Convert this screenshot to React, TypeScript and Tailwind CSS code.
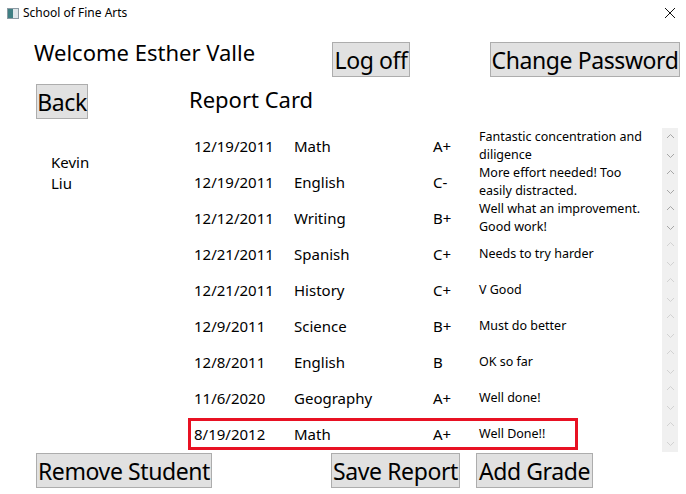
import React from "react";

type Grade = {
  date: string;
  subject: string;
  grade: string;
  comment: string;
  scroll?: boolean;
  selected?: boolean;
};

const grades: Grade[] = [
  { date: "12/19/2011", subject: "Math", grade: "A+", comment: "Fantastic concentration and diligence", scroll: true },
  { date: "12/19/2011", subject: "English", grade: "C-", comment: "More effort needed! Too easily distracted.", scroll: true },
  { date: "12/12/2011", subject: "Writing", grade: "B+", comment: "Well what an improvement. Good work!", scroll: true },
  { date: "12/21/2011", subject: "Spanish", grade: "C+", comment: "Needs to try harder" },
  { date: "12/21/2011", subject: "History", grade: "C+", comment: "V Good" },
  { date: "12/9/2011", subject: "Science", grade: "B+", comment: "Must do better" },
  { date: "12/8/2011", subject: "English", grade: "B", comment: "OK so far" },
  { date: "11/6/2020", subject: "Geography", grade: "A+", comment: "Well done!" },
  { date: "8/19/2012", subject: "Math", grade: "A+", comment: "Well Done!!", selected: true },
];

function Chevron({ up, active }: { up?: boolean; active?: boolean }) {
  return (
    <svg width="9" height="6" viewBox="0 0 9 6" className={active ? "text-[#a6a6a6]" : "text-[#d2d2d2]"}>
      <polyline
        points={up ? "1,5 4.5,1.5 8,5" : "1,1 4.5,4.5 8,1"}
        fill="none"
        stroke="currentColor"
        strokeWidth="1"
      />
    </svg>
  );
}

function Button({ label, className }: { label: string; className: string }) {
  return (
    <button
      className={`h-[35px] shrink-0 bg-[#e1e1e1] border border-[#adadad] text-[23px] leading-none text-black whitespace-nowrap tracking-[-0.4px] flex items-center justify-center pt-[2px] overflow-visible ${className}`}
    >
      {label}
    </button>
  );
}

export default function App() {
  return (
    <div className="w-[686px] h-[494px] bg-white text-black overflow-hidden font-['Noto_Sans','Open_Sans',sans-serif]">
      {/* title bar */}
      <div className="h-[26px] flex items-center pl-[7px] pr-[10px]">
        <svg width="12" height="11" viewBox="0 0 12 11">
          <rect x="0.5" y="0.5" width="11" height="10" fill="#f4f4f4" stroke="#8c9aa3" />
          <rect x="1" y="1" width="5" height="9" fill="#3f7f83" />
          <rect x="6" y="1" width="5" height="9" fill="#dfe6ea" />
        </svg>
        <span className="ml-[4px] text-[12px] leading-none">School of Fine Arts</span>
        <svg width="12" height="12" viewBox="0 0 12 12" className="ml-auto">
          <path d="M1 1 L11 11 M11 1 L1 11" stroke="#111" strokeWidth="1" />
        </svg>
      </div>

      {/* top row */}
      <div className="flex h-[34px] mt-[16px]">
        <div className="w-[332px] shrink-0 pl-[34px] text-[22px] leading-[22px] -mt-[1px]">Welcome Esther Valle</div>
        <Button label="Log off" className="w-[78px] h-[34px]" />
        <Button label="Change Password" className="ml-[80px] w-[190px] h-[34px]" />
      </div>

      {/* second row */}
      <div className="flex h-[35px] mt-[8px]">
        <Button label="Back" className="ml-[36px] w-[52px]" />
        <div className="ml-[101px] text-[22px] leading-[22px] mt-[4px]">Report Card</div>
      </div>

      {/* body */}
      <div className="flex h-[324px] mt-[9px]">
        <div className="w-[188px] shrink-0 pl-[51px] pt-[24px] text-[15px] leading-[21px]">
          <div>Kevin</div>
          <div>Liu</div>
        </div>
        <div className="w-[490px] shrink-0 flex flex-col">
          {grades.map((g, i) => (
            <div key={i} className="h-[36px] flex items-center">
              <div
                className={`w-[390px] h-[32px] shrink-0 flex items-center pl-[3px] border-[3px] ${
                  g.selected ? "border-[#e81123]" : "border-transparent"
                }`}
              >
                <span className="w-[100px] shrink-0 text-[15px]">{g.date}</span>
                <span className="w-[139px] shrink-0 text-[15px]">{g.subject}</span>
                <span className="w-[46px] shrink-0 text-[15px]">{g.grade}</span>
                <span className="w-[172px] shrink-0 text-[12.5px] leading-[18px]">{g.comment}</span>
              </div>
              <div className="ml-auto w-[16px] h-[36px] bg-[#f0f0f0] flex flex-col items-center justify-between py-[5px]">
                <Chevron up active={g.scroll} />
                <Chevron active={g.scroll} />
              </div>
            </div>
          ))}
        </div>
      </div>

      {/* bottom row */}
      <div className="flex mt-[1px]">
        <Button label="Remove Student" className="ml-[36px] w-[176px]" />
        <Button label="Save Report" className="ml-[119px] w-[129px]" />
        <Button label="Add Grade" className="ml-[16px] w-[117px]" />
      </div>
    </div>
  );
}
